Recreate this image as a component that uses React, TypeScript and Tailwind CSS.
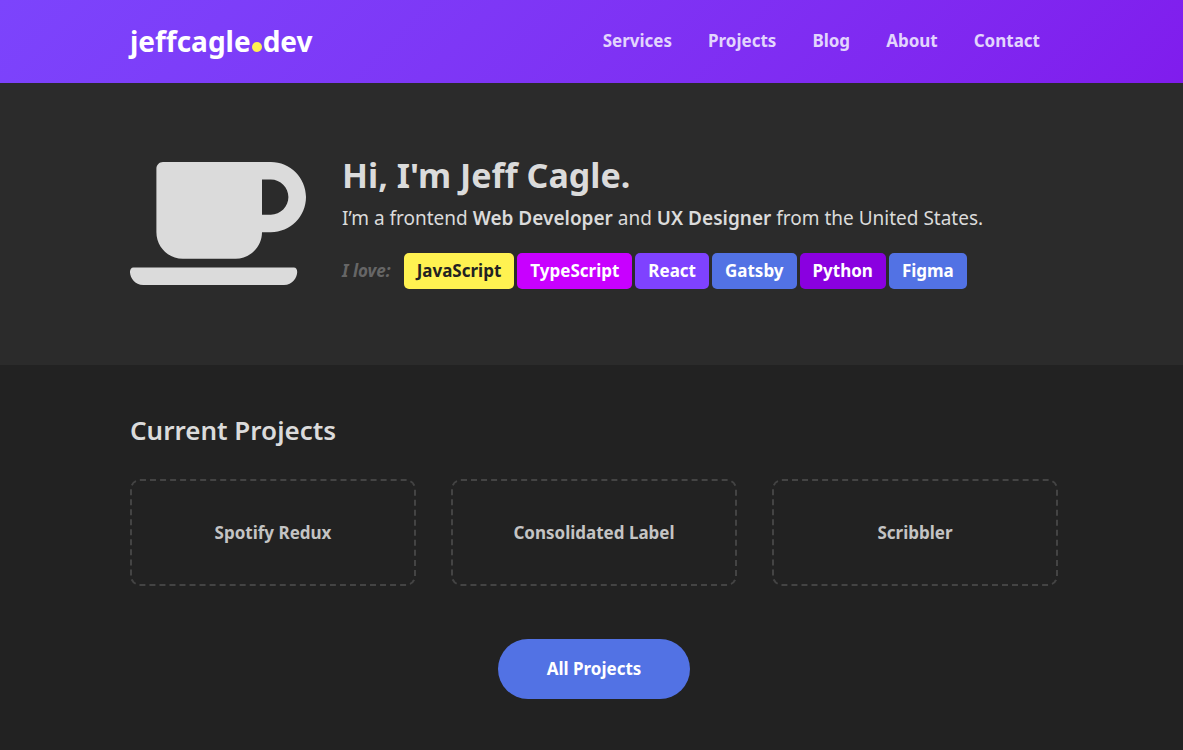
import React from "react";
import { FaCoffee } from "react-icons/fa";

const navItems = ["Services", "Projects", "Blog", "About", "Contact"];

const skills = [
  { name: "JavaScript", tone: "bg-[#fff251] text-[#222222]" },
  { name: "TypeScript", tone: "bg-[#c800ff] text-white" },
  { name: "React", tone: "bg-[#7f42ff] text-white" },
  { name: "Gatsby", tone: "bg-[#5272e4] text-white" },
  { name: "Python", tone: "bg-[#8a00e0] text-white" },
  { name: "Figma", tone: "bg-[#5272e4] text-white" },
];

const projects = ["Spotify Redux", "Consolidated Label", "Scribbler"];

function Header() {
  return (
    <header className="bg-linear-135 from-[#7c44fc] to-[#801ced] pr-[143px] pl-[130px]">
      <div className="flex h-[83px] items-center justify-between pb-0.5">
        <a href="#home" className="flex items-baseline text-[28px] font-bold text-white">
          jeffcagle
          <span className="mx-px size-[10px] rounded-full bg-[#fff251]" />
          dev
        </a>
        <nav aria-label="Main" className="flex gap-9">
          {navItems.map((item) => (
            <a key={item} href={`#${item.toLowerCase()}`} className="text-[17px] font-bold text-[#e2d5fd]">
              {item}
            </a>
          ))}
        </nav>
      </div>
    </header>
  );
}

function Hero() {
  return (
    <section className="flex items-center gap-9 bg-[#2b2b2b] pt-[70px] pr-[125px] pb-[71px] pl-[130px]">
      <FaCoffee className="h-[141px] w-[176px] shrink-0 text-[#dbdbdb]" aria-hidden="true" />
      <div className="pb-1">
        <h1 className="text-[34px] leading-10 font-bold text-[#dbdbdb]">Hi, I'm Jeff Cagle.</h1>
        <p className="mt-[9px] text-[19px] leading-7 text-[#dbdbdb]">
          I’m a frontend <strong className="font-semibold">Web Developer</strong> and{" "}
          <strong className="font-semibold">UX Designer</strong> from the United States.
        </p>
        <div className="mt-[21px] flex items-center">
          <span className="mr-[13px] text-[17px] font-bold text-[#666666] italic">I love:</span>
          <ul className="flex gap-[3px]">
            {skills.map((skill) => (
              <li key={skill.name} className={`rounded-[5px] px-[13px] text-[17px] leading-9 font-bold ${skill.tone}`}>
                {skill.name}
              </li>
            ))}
          </ul>
        </div>
      </div>
    </section>
  );
}

function Projects() {
  return (
    <section id="projects" className="pt-[47px] pr-[125px] pb-12 pl-[130px]">
      <h2 className="text-[26px] leading-9 font-semibold text-[#dbdbdb]">Current Projects</h2>
      <div className="mt-[31px] grid grid-cols-3 gap-[35px]">
        {projects.map((project) => (
          <a
            key={project}
            href="#projects"
            className="rounded-[10px] border-2 border-dashed border-[#444444] py-10 text-center text-[17px] leading-[23px] font-bold text-[#c4c4c4]"
          >
            {project}
          </a>
        ))}
      </div>
      <div className="mt-[53px] flex justify-center">
        <button
          type="button"
          className="h-[60px] w-48 rounded-full bg-[#5272e4] text-[17px] font-bold text-white"
        >
          All Projects
        </button>
      </div>
    </section>
  );
}

export default function App() {
  return (
    <div className="min-h-screen bg-[#222222] font-['Noto_Sans',sans-serif]">
      <Header />
      <main>
        <Hero />
        <Projects />
      </main>
    </div>
  );
}
